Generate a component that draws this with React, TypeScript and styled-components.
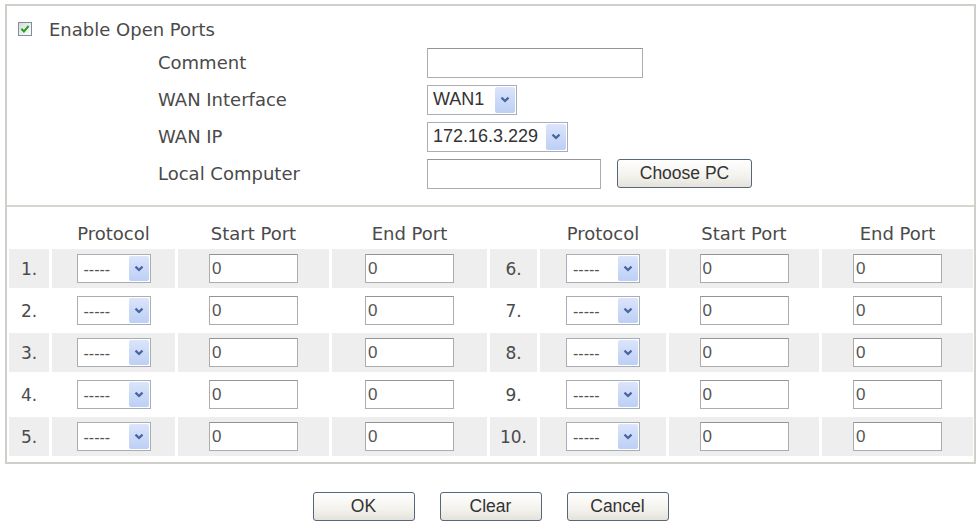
import { createGlobalStyle, styled } from 'styled-components';

const GlobalStyle = createGlobalStyle`
  html, body {
    margin: 0;
    padding: 0;
    background: #ffffff;
  }
  body {
    font-family: "DejaVu Sans", Verdana, sans-serif;
    color: #4a4a4a;
  }
`;

const COLUMNS = [40, 123, 151, 155, 47, 126, 150, 151];
const HEADERS = ['', 'Protocol', 'Start Port', 'End Port', '', 'Protocol', 'Start Port', 'End Port'];

function Chevron() {
  return (
    <svg width="10" height="7" viewBox="0 0 10 7">
      <path d="M1.5 1.6 L5 5 L8.5 1.6" fill="none" stroke="#4a64a0" strokeWidth="2.2" />
    </svg>
  );
}

function Select({ value, width, small }: { value: string; width: number; small?: boolean }) {
  return (
    <SelectBox $width={width} $small={small}>
      <SelectValue $small={small}>{value}</SelectValue>
      <ArrowBox>
        <Chevron />
      </ArrowBox>
    </SelectBox>
  );
}

function CheckMark() {
  return (
    <svg width="14" height="14" viewBox="0 0 14 14">
      <defs>
        <linearGradient id="cbg" x1="0" y1="0" x2="1" y2="1">
          <stop offset="0" stopColor="#d8d8d2" />
          <stop offset="1" stopColor="#ffffff" />
        </linearGradient>
      </defs>
      <rect x="0.5" y="0.5" width="13" height="13" fill="url(#cbg)" stroke="#7d8f9f" />
      <path d="M3.4 6.8 L5.9 9.4 L10.6 4" fill="none" stroke="#25a125" strokeWidth="2" />
    </svg>
  );
}

export default function App() {
  const rows = [1, 2, 3, 4, 5];

  return (
    <Page>
      <GlobalStyle />
      <Panel>
        <TopSection>
          <EnableRow>
            <CheckMark />
            <span>Enable Open Ports</span>
          </EnableRow>
          <FormGrid>
            <FieldLabel>Comment</FieldLabel>
            <div>
              <TextInput $width={216} defaultValue="" />
            </div>
            <FieldLabel>WAN Interface</FieldLabel>
            <div>
              <Select value="WAN1" width={90} />
            </div>
            <FieldLabel>WAN IP</FieldLabel>
            <div>
              <Select value="172.16.3.229" width={141} />
            </div>
            <FieldLabel>Local Computer</FieldLabel>
            <ControlRow>
              <TextInput $width={174} defaultValue="" />
              <PushButton $width={135}>Choose PC</PushButton>
            </ControlRow>
          </FormGrid>
        </TopSection>
        <Divider />
        <PortGrid>
          {HEADERS.map((h, i) => (
            <HeaderCell key={`h${i}`}>{h}</HeaderCell>
          ))}
          {rows.map((n) => {
            const shaded = n % 2 === 1;
            return [n, n + 5].map((num) => (
              <RowGroup key={num}>
                <Cell $shaded={shaded}>
                  <RowNumber>{num}.</RowNumber>
                </Cell>
                <Cell $shaded={shaded}>
                  <Select value="-----" width={74} small />
                </Cell>
                <Cell $shaded={shaded}>
                  <PortInput defaultValue="0" />
                </Cell>
                <Cell $shaded={shaded}>
                  <PortInput defaultValue="0" />
                </Cell>
              </RowGroup>
            ));
          })}
        </PortGrid>
      </Panel>
      <ButtonBar>
        <PushButton $width={102}>OK</PushButton>
        <PushButton $width={102}>Clear</PushButton>
        <PushButton $width={102}>Cancel</PushButton>
      </ButtonBar>
    </Page>
  );
}

const Page = styled.div`
  width: 978px;
  height: 526px;
  box-sizing: border-box;
  padding: 4px 0 0 5px;
`;

const Panel = styled.div`
  width: 971px;
  box-sizing: border-box;
  border: 2px solid #d0d0cb;
`;

const TopSection = styled.div`
  padding: 8px 0 13px 0;
`;

const EnableRow = styled.div`
  height: 30px;
  display: flex;
  align-items: center;
  gap: 17px;
  padding-left: 11px;
  font-size: 18px;
  color: #4a4a4a;
`;

const FormGrid = styled.div`
  display: grid;
  grid-template-columns: 269px auto;
  grid-auto-rows: 37px;
  align-items: center;
  padding-left: 151px;
`;

const FieldLabel = styled.div`
  font-size: 18px;
  color: #4a4a4a;
`;

const ControlRow = styled.div`
  display: flex;
  align-items: center;
  gap: 16px;
`;

const TextInput = styled.input<{ $width: number }>`
  width: ${(p) => p.$width}px;
  height: 30px;
  box-sizing: border-box;
  border: 1px solid #acacac;
  border-top-color: #949494;
  background: #fff;
  padding: 0 3px;
  font-family: "Liberation Sans", Arial, sans-serif;
  font-size: 18px;
  color: #333;
  outline: none;
`;

const SelectBox = styled.div<{ $width: number; $small?: boolean }>`
  width: ${(p) => p.$width}px;
  height: ${(p) => (p.$small ? 29 : 30)}px;
  box-sizing: border-box;
  display: inline-flex;
  border: 1px solid #a8aeb5;
  background: #fff;
`;

const SelectValue = styled.div<{ $small?: boolean }>`
  flex: 1;
  display: flex;
  align-items: center;
  padding-left: ${(p) => (p.$small ? 6 : 5)}px;
  padding-top: ${(p) => (p.$small ? 2 : 0)}px;
  font-family: "Liberation Sans", Arial, sans-serif;
  font-size: ${(p) => (p.$small ? 16 : 18)}px;
  color: ${(p) => (p.$small ? '#555' : '#333')};
  white-space: nowrap;
  overflow: hidden;
`;

const ArrowBox = styled.div`
  width: 20px;
  margin: 1px;
  border-radius: 2px;
  background: linear-gradient(180deg, #dbe5fb 0%, #bccff5 100%);
  display: flex;
  align-items: center;
  justify-content: center;
`;

const Divider = styled.div`
  height: 2px;
  background: #d6d6d1;
`;

const PortGrid = styled.div`
  display: grid;
  grid-template-columns: ${COLUMNS.map((c) => `${c}px`).join(' ')};
  grid-template-rows: 26px repeat(5, 39px);
  column-gap: 3px;
  row-gap: 3px;
  padding: 13px 0 6px 2px;
`;

const RowGroup = styled.div`
  display: contents;
`;

const HeaderCell = styled.div`
  display: flex;
  align-items: center;
  justify-content: center;
  font-size: 18px;
  color: #4a4a4a;
  white-space: nowrap;
`;

const Cell = styled.div<{ $shaded: boolean }>`
  display: flex;
  align-items: center;
  justify-content: center;
  background: ${(p) => (p.$shaded ? '#eeeeee' : '#ffffff')};
`;

const RowNumber = styled.span`
  font-size: 17px;
  color: #4a4a4a;
`;

const PortInput = styled.input`
  width: 89px;
  height: 29px;
  box-sizing: border-box;
  border: 1px solid #acacac;
  border-top-color: #949494;
  background: #fff;
  padding: 0 2px;
  font-family: "Liberation Sans", Arial, sans-serif;
  font-size: 17px;
  color: #555;
  outline: none;
`;

const ButtonBar = styled.div`
  width: 971px;
  margin-top: 28px;
  display: flex;
  justify-content: center;
  gap: 25px;
`;

const PushButton = styled.button<{ $width: number }>`
  width: ${(p) => p.$width}px;
  height: 29px;
  box-sizing: border-box;
  border: 1px solid #56677a;
  border-radius: 3px;
  background: linear-gradient(180deg, #ffffff 0%, #f3f2ed 60%, #e4e2da 100%);
  font-family: "Liberation Sans", Arial, sans-serif;
  font-size: 17.5px;
  color: #333;
  padding: 0;
  cursor: pointer;
`;
